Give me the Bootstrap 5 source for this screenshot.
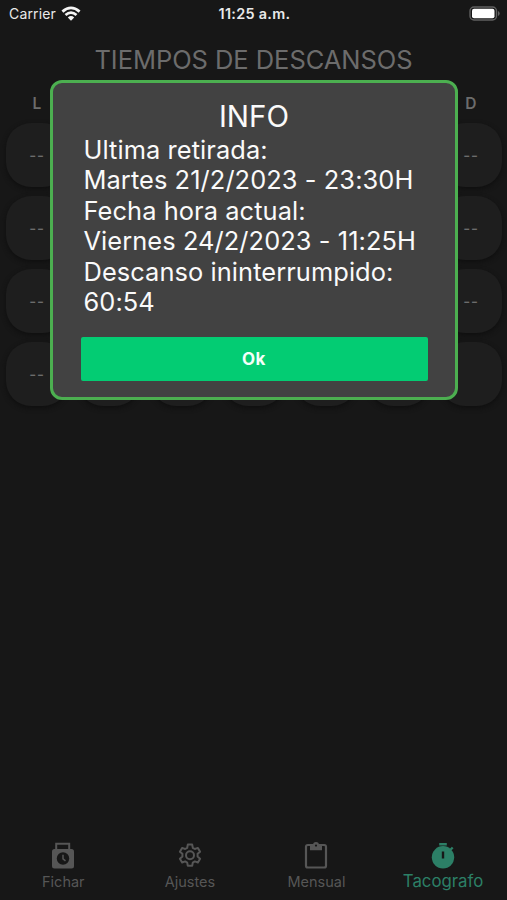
<!DOCTYPE html>
<html lang="es">
<head>
<meta charset="utf-8">
<meta name="viewport" content="width=device-width, initial-scale=1">
<title>Tiempos de descansos</title>
<link rel="stylesheet" href="https://cdn.jsdelivr.net/npm/bootstrap@5.3.0/dist/css/bootstrap.min.css">
<style>
body{background:#171717;color:#6c6c6c;font-family:Inter,"Liberation Sans",sans-serif;height:900px;overflow:hidden}
.status-bar{height:28px;padding:0 7px 0 9px;color:#e9e9e9;font-size:14px;line-height:28px;display:grid;grid-template-columns:1fr auto 1fr}
.carrier{letter-spacing:.15px}
.clock{font-weight:600;font-size:14.4px;letter-spacing:.3px}
.screen-title{font-size:25.5px;line-height:32px;margin-top:15.5px;letter-spacing:-.05px;font-weight:400}
.week{display:grid;grid-template-columns:repeat(7,62px);justify-content:space-between;padding:0 5px 0 6px}
.days{margin-top:18px;height:20px;line-height:20px;font-size:15.5px;font-weight:600;text-align:center}
.slots{margin-top:9.5px;row-gap:9px}
.slot{height:64px;border-radius:25px;background:#1e1e1e;box-shadow:0 2px 5px #0f0f0f;display:flex;align-items:center;justify-content:center}
.slot span{font-size:15px;font-weight:500;letter-spacing:.9px;line-height:20px;padding-top:1px}
.info-box{left:50px;top:80px;width:408px;height:320px;background:#424242;border:3px solid #4caf50;border-radius:12px;color:#fafafa;padding:16.5px 27.5px 0}
.info-box h2{font-size:29.5px;line-height:32px;margin:0;font-weight:400;letter-spacing:0}
.info-text{font-size:25.4px;line-height:30.6px;padding-left:3px;white-space:nowrap;letter-spacing:.08px;margin-top:3px}
.info-text div{width:max-content}
.ok-btn{height:44px;border-radius:2px;background:#03cc73;color:#f4fff9;font-size:17px;font-weight:700;border:0;padding:1px 0 0;margin-top:19px;letter-spacing:.4px}
.tab-bar{height:63px;color:#565656;font-size:14.5px}
.tab-item{width:126.6px;line-height:20px}
.tab-item svg{display:block;margin-bottom:2.6px}
.tab-item.current{color:#2c7f66;font-size:16.8px}
.tab-item.current span{margin-top:-1px}
</style>
<script src="https://cdn.jsdelivr.net/npm/bootstrap@5.3.0/dist/js/bootstrap.bundle.min.js"></script>
</head>
<body class="d-flex flex-column position-relative">
<header class="status-bar">
  <div class="d-flex align-items-center"><span class="carrier">Carrier</span>
    <svg width="20" height="16" viewBox="0 0 20 16" fill="none" stroke="#f4f4f4" stroke-width="2.8" style="margin-left:5px"><path d="M1.4 5.6Q10-1.8 18.6 5.6M4.5 9Q10 4.2 15.5 9"/><path d="M6.8 11.4Q10 8.6 13.2 11.4L10 14.7Z" fill="#f4f4f4" stroke="none"/></svg>
  </div>
  <div class="clock">11:25 a.m.</div>
  <div class="d-flex align-items-center justify-content-end">
    <svg width="31" height="16" viewBox="0 0 31 16"><rect x="1" y="1" width="26.5" height="13" rx="4" fill="none" stroke="#606060" stroke-width="1.4"/><rect x="3" y="2.7" width="22.5" height="9.6" rx="2" fill="#fff"/><path d="M29 5v5q1.7-.8 1.7-2.5T29 5Z" fill="#606060"/></svg>
  </div>
</header>
<main class="flex-grow-1">
  <h1 class="screen-title text-center mb-0">TIEMPOS DE DESCANSOS</h1>
  <div class="week days"><span>L</span><span></span><span></span><span></span><span></span><span></span><span>D</span></div>
  <div class="week slots">
    <div class="slot"><span>--</span></div><div class="slot"></div><div class="slot"></div><div class="slot"></div><div class="slot"></div><div class="slot"></div><div class="slot"><span>--</span></div>
    <div class="slot"><span>--</span></div><div class="slot"></div><div class="slot"></div><div class="slot"></div><div class="slot"></div><div class="slot"></div><div class="slot"><span>--</span></div>
    <div class="slot"><span>--</span></div><div class="slot"></div><div class="slot"></div><div class="slot"></div><div class="slot"></div><div class="slot"></div><div class="slot"><span>--</span></div>
    <div class="slot"><span>--</span></div><div class="slot"></div><div class="slot"></div><div class="slot"></div><div class="slot"></div><div class="slot"></div><div class="slot"></div>
  </div>
</main>
<nav class="tab-bar d-flex">
  <div class="tab-item d-flex flex-column align-items-center">
    <svg width="28" height="32" viewBox="0 0 28 32"><path d="M7.2 12V6.8h13V12" fill="none" stroke="currentColor" stroke-width="2"/><rect x="3" y="12" width="22" height="19.5" rx="2.5" fill="currentColor"/><circle cx="14" cy="21.5" r="6.2" fill="#171717"/><path d="M14 17.7v4.2l2.5 2" fill="none" stroke="currentColor" stroke-width="1.5"/></svg>
    <span>Fichar</span></div>
  <div class="tab-item d-flex flex-column align-items-center">
    <svg width="28" height="32" viewBox="0 0 28 32" fill="none" stroke="currentColor" stroke-width="2"><path d="M11.8 7.6h4.4l.6 3.2 2 1.2 3.1-1.1 2.2 3.8-2.5 2.1v2.8l2.5 2.1-2.2 3.8-3.1-1.1-2 1.2-.6 3.2h-4.4l-.6-3.2-2-1.2-3.1 1.1-2.2-3.8 2.5-2.1v-2.8l-2.5-2.1 2.2-3.8 3.1 1.1 2-1.2Z" stroke-linejoin="round"/><circle cx="14" cy="18.2" r="4"/></svg>
    <span>Ajustes</span></div>
  <div class="tab-item d-flex flex-column align-items-center">
    <svg width="28" height="32" viewBox="0 0 28 32"><rect x="4" y="8" width="20" height="22.5" rx="1.8" fill="none" stroke="currentColor" stroke-width="2.2"/><path d="M8 8h3a3 3 0 0 1 6 0h3v5.3H8Z" fill="currentColor"/><circle cx="14" cy="8.6" r="1.1" fill="#171717"/></svg>
    <span>Mensual</span></div>
  <div class="tab-item current d-flex flex-column align-items-center">
    <svg width="28" height="32" viewBox="0 0 28 32"><circle cx="14" cy="20.3" r="11.2" fill="currentColor"/><path d="M10.2 7.3h7.6M20.7 13.5l3-3" stroke="currentColor" stroke-width="2.4"/><path d="M14 14.5v7" stroke="#171717" stroke-width="2.4"/></svg>
    <span>Tacografo</span></div>
</nav>
<section class="info-box position-absolute" role="dialog" aria-label="Info">
  <h2 class="text-center">INFO</h2>
  <div class="info-text"><div>Ultima retirada:</div><div>Martes 21/2/2023 - 23:30H</div><div>Fecha hora actual:</div><div>Viernes 24/2/2023 - 11:25H</div><div>Descanso ininterrumpido:</div><div>60:54</div></div>
  <button class="ok-btn btn w-100" type="button">Ok</button>
</section>
</body>
</html>
